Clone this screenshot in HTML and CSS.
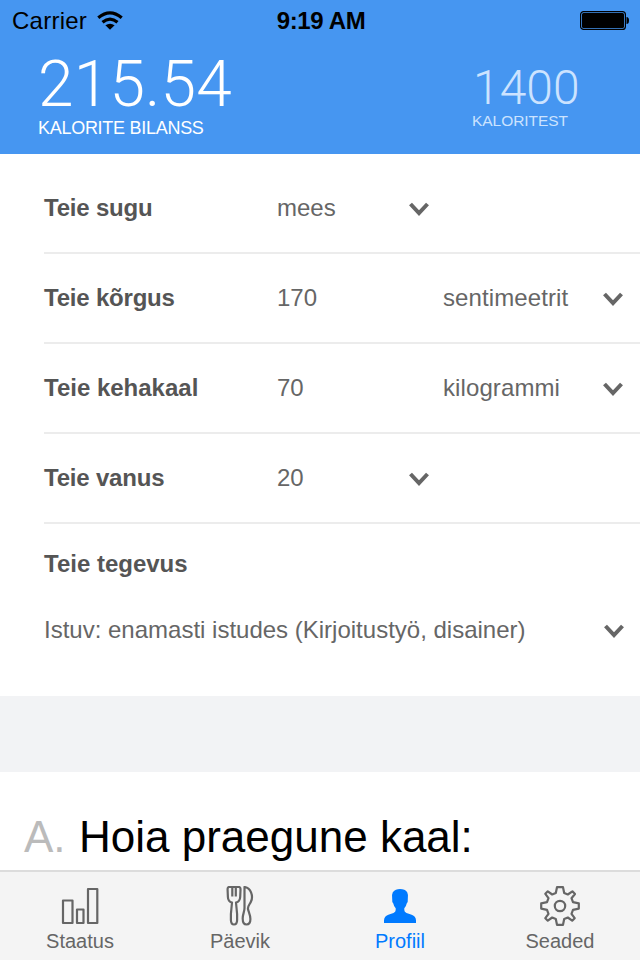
FILE: index.html
```html
<!DOCTYPE html>
<html lang="et">
<head>
<meta charset="utf-8">
<title>Profiil</title>
<link rel="stylesheet" href="styles.css">
</head>
<body>
<div class="app">
  <header class="header">
    <div class="status">
      <div class="carrier"><span class="carrier-name">Carrier</span>
        <svg class="wifi" viewBox="0 0 26 20"><g fill="none" stroke="#000" stroke-width="3.2"><path d="M1.3 6.8Q13-3.2 24.7 6.8"/><path d="M5.5 11.3Q13 5 20.5 11.3"/></g><path d="M8.4 14.3Q13 11 17.6 14.3L13 18.8Z"/></svg>
      </div>
      <span class="time">9:19 AM</span>
      <svg class="battery" viewBox="0 0 50 20"><rect x=".6" y=".6" width="44.8" height="17.8" rx="3" fill="none" stroke="#000" stroke-width="1.2"/><rect x="2" y="2" width="42" height="15" rx="1.5"/><path d="M46.5 6Q49 6 49 9.5Q49 13 46.5 13Z"/></svg>
    </div>
    <div class="totals">
      <div class="balance"><span class="balance-value">215.54</span><span class="balance-label">KALORITE BILANSS</span></div>
      <div class="goal"><span class="goal-value">1400</span><span class="goal-label">KALORITEST</span></div>
    </div>
  </header>
  <main class="content">
    <section class="form">
      <div class="row first"><b class="label tight">Teie sugu</b><span class="value">mees</span><svg class="chevron near" viewBox="0 0 20 14"><path d="M1.5 2L10 11L18.500 2"/></svg></div>
      <div class="row"><b class="label tight">Teie kõrgus</b><span class="value">170</span><span class="unit">sentimeetrit</span><svg class="chevron" viewBox="0 0 20 14"><path d="M1.5 2L10 11L18.500 2"/></svg></div>
      <div class="row"><b class="label">Teie kehakaal</b><span class="value">70</span><span class="unit">kilogrammi</span><svg class="chevron" viewBox="0 0 20 14"><path d="M1.5 2L10 11L18.500 2"/></svg></div>
      <div class="row"><b class="label tight">Teie vanus</b><span class="value">20</span><svg class="chevron near" viewBox="0 0 20 14"><path d="M1.5 2L10 11L18.500 2"/></svg></div>
      <div class="activity">
        <b class="label">Teie tegevus</b>
        <div class="choice"><span class="choice-text">Istuv: enamasti istudes (Kirjoitustyö, disainer)</span><svg class="chevron" viewBox="0 0 20 14"><path d="M1.5 2L10 11L18.500 2"/></svg></div>
      </div>
    </section>
    <section class="plan"><span class="letter">A.</span><h1 class="plan-title">Hoia praegune kaal:</h1></section>
  </main>
  <nav class="tabs">
    <div class="tab"><svg class="icon" viewBox="0 0 40 40"><path d="M3 14.500H12.500V37H3ZM17 23.500H23.500V37H17ZM28 3H37.300V37H28Z"/></svg><span>Staatus</span></div>
    <div class="tab"><svg class="icon" viewBox="0 0 40 40"><path d="M9.200 1Q7.400 1 7.600 4L7.900 11Q8 15.500 12 16.500L10.900 28V34Q11 38.500 14 38.500Q17.100 38.500 17.100 34V28L16 16.500Q20 15.500 20.200 11L20.500 4Q20.700 1 18.800 1ZM12.300 1V10.500M15.800 1V10.500M24.500 1C31 2 33.500 10 31 15.500C29.800 18.500 27.500 20 28 23C28.500 26 30.400 28.500 30.400 33C30.400 37 28.500 38.500 26.500 38.500C24 38.500 22.700 36 22.700 32.500C22.700 28 24.500 26 24.500 22Z"/></svg><span>Päevik</span></div>
    <div class="tab active"><svg class="icon solid" viewBox="0 0 40 40"><path d="M4 37V34.500Q4 30 9 28.500L13.500 27Q15.700 26 15.700 24V22.300Q13.800 20.300 13.300 17.500Q11.900 16.500 12.200 13.200Q11.500 8.500 12.800 6.200Q15.500 3 20 3Q25 3 27.200 6.200Q28.500 8.500 27.800 13.200Q28.100 16.500 26.700 17.500Q26.200 20.300 24.300 22.300V24Q24.300 26 26.500 27L31 28.500Q36 30 36 34.500V37Z"/></svg><span>Profiil</span></div>
    <div class="tab"><svg class="icon" viewBox="0 0 40 40"><path d="M17 1.200H23L24.200 7L27.800 8.500L32.400 5.300L35 8L31.500 12.200L33 16.200L38.800 17.400V22.600L33 23.800L31.500 27.800L34.700 32.200L32.200 34.700L27.800 31.500L24.200 33L23 38.800H17L15.800 33L12.200 31.500L7.800 34.700L5.300 32.200L8.500 27.800L7 23.800L1.200 22.600V17.400L7 16.200L8.500 12.200L5.300 7.800L7.800 5.300L12.200 8.500L15.800 7Z"/><circle cx="20" cy="20" r="5.200"/></svg><span>Seaded</span></div>
  </nav>
</div>
</body>
</html>
```
FILE: styles.css
```css
* { box-sizing: border-box; }
body { margin: 0; background: #fff; font-family: "Liberation Sans", Arial, sans-serif; color: #666; }
.app { width: 640px; height: 960px; display: flex; flex-direction: column; overflow: hidden; }
svg { display: block; flex: none; }
span, b, h1 { white-space: nowrap; }
.header { height: 154px; background: #4696f1; flex: none; }
.status { height: 40px; display: grid; grid-template-columns: 1fr auto 1fr; align-items: center; padding: 1px 10px 0 12px; color: #000; font-size: 24px; line-height: 40px; }
.carrier { display: flex; align-items: center; gap: 10px; }
.carrier-name { letter-spacing: .25px; }
.wifi { width: 26px; height: 20px; }
.time { font-weight: bold; letter-spacing: -.35px; }
.battery { width: 50px; height: 20px; justify-self: end; }
.totals { height: 114px; display: flex; justify-content: space-between; padding: 0 60px 0 38px; color: #fff; }
.balance, .goal { display: flex; flex-direction: column; }
.balance-value { font: 300 64px/70px Roboto, sans-serif; padding-top: 10px; height: 77px; letter-spacing: .2px; }
.balance-label { font-size: 18px; line-height: 22px; letter-spacing: -.28px; }
.goal { color: #cce3ff; width: 108px; }
.goal-value { font: 300 48px/54px Roboto, sans-serif; padding: 21px 0 0 1px; height: 71px; }
.goal-label { font-size: 15.500px; line-height: 20px; letter-spacing: -.05px; }
.content { flex: 1; background: #f2f3f5; overflow: hidden; }
.form { height: 542px; background: #fff; padding-left: 44px; }
.row { height: 90px; border-bottom: 2px solid #ececec; display: grid; grid-template-columns: 233px 132px 34px 160px 1fr; align-items: center; font-size: 24px; line-height: 30px; }
.row.first { height: 100px; padding-top: 10px; }
.label { color: #555; font-size: 24px; }
.tight { letter-spacing: -.2px; }
.unit { grid-column: 4; letter-spacing: .1px; }
.chevron { width: 20px; height: 14px; fill: none; stroke: #666; stroke-width: 4; margin-top: 2px; grid-column: 5; }
.near { grid-column: 3; }
.activity { padding-top: 25px; font-size: 24px; line-height: 30px; }
.choice { display: flex; justify-content: space-between; align-items: center; padding: 36px 16px 0 0; }
.plan { height: 120px; margin-top: 76px; background: #fff; display: flex; padding: 38px 0 0 24px; line-height: 54px; font-size: 44px; }
.letter { width: 55px; color: #bbb; }
.plan-title { margin: 0; font-size: 44px; font-weight: 400; color: #000; }
.tabs { height: 90px; flex: none; display: grid; grid-template-columns: repeat(4, 1fr); border-top: 2px solid #dcdcdc; background: #f4f4f4; }
.tab { display: flex; flex-direction: column; align-items: center; padding-top: 14px; font-size: 20px; line-height: 24px; gap: 3px; }
.icon { width: 40px; height: 40px; fill: none; stroke: #666; stroke-width: 2.200; stroke-linejoin: round; }
.active { color: #007aff; }
.solid { fill: #007aff; stroke: none; }
```
